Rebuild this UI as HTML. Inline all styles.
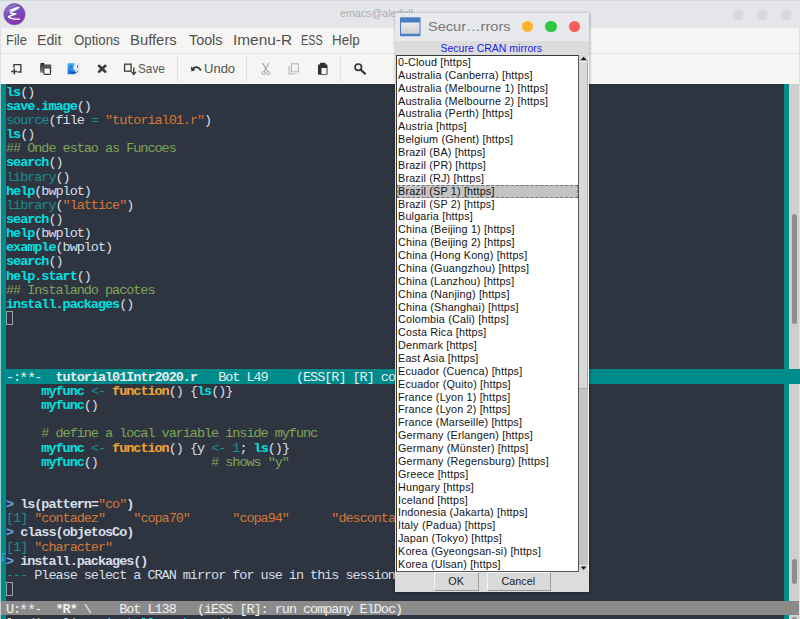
<!DOCTYPE html><html><head><meta charset="utf-8"><style>
*{margin:0;padding:0;box-sizing:border-box}
html,body{width:800px;height:619px;overflow:hidden;background:#2e3540}
body{position:relative;font-family:"Liberation Sans",sans-serif}
div{position:absolute}
.ed{font-family:"Liberation Mono",monospace;font-size:13.5px;letter-spacing:-1.03px;white-space:pre;line-height:14px;color:#d8dee9;left:6px}
.kw{color:#00e0e0;font-weight:bold}
.dim{color:#1c8c94}
.str{color:#d3783a}
.cm{color:#7ea45a}
.fn{color:#f2a52e;font-weight:bold}
.pr{color:#6fa5e0;font-weight:bold}
.inp{color:#d8dee9;font-weight:bold}
.mi{font-size:14.4px;color:#505050;white-space:pre;line-height:16px;transform-origin:0 0}
.li{left:398px;font-size:10.8px;letter-spacing:0.18px;color:#141414;white-space:pre;line-height:13px}
</style></head><body>
<div style="left:0;top:0;width:800px;height:28px;background:#e5e6ea"></div>
<div style="left:0;top:0;width:800px;height:1px;background:#d5d6da"></div>
<svg style="position:absolute;left:3px;top:3px" width="23" height="23" viewBox="0 0 23 23">
<defs><linearGradient id="eg" x1="0" y1="0" x2="0.6" y2="1"><stop offset="0" stop-color="#8c84cf"/><stop offset="0.55" stop-color="#7a4fb9"/><stop offset="1" stop-color="#8a2fb5"/></linearGradient></defs>
<circle cx="11.5" cy="11.2" r="10.6" fill="url(#eg)" stroke="#6a3aa0" stroke-width="0.6"/>
<path d="M7 7.6 C10 6 13 4.6 15.7 4.4 C13 7 8.5 8.2 7.6 10 C9 11 11 10.6 12.8 10.9 C10 12 6 12.6 5.4 13.8 C8 16.2 13 16.4 16.4 16.3" fill="none" stroke="#fff" stroke-width="1.5" stroke-linecap="round" stroke-linejoin="round"/>
</svg>
<div style="left:340px;top:7px;font-size:11px;line-height:13px;color:#a9acb3;white-space:pre;transform:scaleX(0.97);transform-origin:0 0">emacs@aledell</div>
<div style="left:732.5px;top:8.5px;width:11px;height:11px;border-radius:50%;background:#d8d9dd"></div>
<div style="left:756.5px;top:8.5px;width:11px;height:11px;border-radius:50%;background:#d8d9dd"></div>
<div style="left:780.5px;top:8.5px;width:11px;height:11px;border-radius:50%;background:#d8d9dd"></div>
<div style="left:0;top:28px;width:800px;height:25px;background:#f6f5f3"></div>
<div style="left:0;top:53px;width:800px;height:1px;background:#e4e2df"></div>
<div style="left:0;top:54px;width:800px;height:29px;background:#f6f5f3"></div>
<div style="left:0;top:28px;width:1px;height:55px;background:#e2e3e6"></div>
<div class="mi" style="left:5.85px;top:32px;transform:scaleX(0.902)">File</div>
<div class="mi" style="left:37.26px;top:32px;transform:scaleX(0.987)">Edit</div>
<div class="mi" style="left:73.75px;top:32px;transform:scaleX(0.921)">Options</div>
<div class="mi" style="left:129.72px;top:32px;transform:scaleX(1.031)">Buffers</div>
<div class="mi" style="left:188.75px;top:32px;transform:scaleX(0.996)">Tools</div>
<div class="mi" style="left:232.68px;top:32px;transform:scaleX(1.069)">Imenu-R</div>
<div class="mi" style="left:301.25px;top:32px;transform:scaleX(0.754)">ESS</div>
<div class="mi" style="left:332.31px;top:32px;transform:scaleX(0.935)">Help</div>
<div style="left:177px;top:57px;width:1px;height:24px;background:#e2e0dc"></div>
<div style="left:246px;top:57px;width:1px;height:24px;background:#e2e0dc"></div>
<div style="left:340px;top:57px;width:1px;height:24px;background:#e2e0dc"></div>
<svg style="position:absolute;left:0;top:54px" width="380" height="29" viewBox="0 54 380 29">
<!-- new file -->
<path d="M14 67.8 V64.6 H20.8 V72 H17.8" fill="none" stroke="#3a3a3a" stroke-width="1.4"/>
<path d="M11.2 71.5 H17.3 M14.3 68.5 V74.6" stroke="#3a3a3a" stroke-width="1.5"/>
<!-- open/copy -->
<defs><linearGradient id="og" x1="0" y1="0" x2="0.3" y2="1"><stop offset="0" stop-color="#3a3a3a"/><stop offset="1" stop-color="#8a8a8a"/></linearGradient></defs>
<rect x="40.6" y="63" width="3.6" height="2" fill="#222"/>
<rect x="40" y="64.5" width="11.3" height="8.3" rx="1" fill="url(#og)"/>
<rect x="43.8" y="67.8" width="6.6" height="6.5" rx="0.8" fill="#fbfbfb" stroke="#3c3c3c" stroke-width="1.2"/>
<!-- finder -->
<defs><linearGradient id="fb" x1="0" y1="0" x2="0" y2="1"><stop offset="0" stop-color="#3ab0f5"/><stop offset="1" stop-color="#1a6fe0"/></linearGradient></defs>
<rect x="67.6" y="63.2" width="12.6" height="11" rx="1" fill="#e6ecf2"/>
<path d="M68.6 63.2 H74.8 C73.6 65.5 73.2 68 73.6 70 H75 C75.1 71.5 75.3 73 75.6 74.2 H68.6 C68 74.2 67.6 73.8 67.6 73.2 V64.2 C67.6 63.6 68 63.2 68.6 63.2Z" fill="url(#fb)"/>
<path d="M70.8 65.6 V67.4 M77.6 65.6 V67.4" stroke="#1b3a66" stroke-width="0.9"/>
<path d="M69.8 71.6 C72 73 76 73 78.2 71.4" stroke="#1b3a66" stroke-width="0.7" fill="none"/>
<!-- close X -->
<path d="M99 65.8 L105.3 71.7 M105.3 65.8 L99 71.7" stroke="#3a3a3a" stroke-width="2.6" stroke-linecap="round"/>
<!-- save icon -->
<rect x="124.6" y="64.2" width="6.5" height="7" fill="none" stroke="#3a3a3a" stroke-width="1.3"/>
<path d="M133.8 67.5 V73.8 M131.6 71.8 L133.8 74.5 L136 71.8" fill="none" stroke="#3a3a3a" stroke-width="1.3"/>
<!-- undo arrow -->
<path d="M192.5 69.5 C194 66.5 198 66 201 70.5" fill="none" stroke="#333" stroke-width="1.8"/>
<path d="M190.8 66.5 L191.5 71.5 L195.5 70 Z" fill="#333"/>
<!-- scissors -->
<path d="M262.5 63 L267.5 71.5 M269 63 L264 71.5" stroke="#a6a6a6" stroke-width="1.2"/>
<circle cx="263.6" cy="73" r="1.6" fill="none" stroke="#a6a6a6" stroke-width="1"/>
<circle cx="268.4" cy="73" r="1.6" fill="none" stroke="#a6a6a6" stroke-width="1"/>
<!-- copy -->
<rect x="291.5" y="63.8" width="6.8" height="8" fill="none" stroke="#b2b2b2" stroke-width="1"/>
<path d="M289.2 66 V74 H295.5" fill="none" stroke="#b2b2b2" stroke-width="1.1"/>
<!-- paste -->
<rect x="318" y="64.3" width="9.5" height="10.5" rx="1.5" fill="#303030"/>
<rect x="320" y="62.8" width="5.5" height="2.5" rx="0.8" fill="#303030"/>
<rect x="321.5" y="68" width="5" height="6" fill="#f6f5f3"/>
<!-- search -->
<circle cx="358.3" cy="67.2" r="3.2" fill="none" stroke="#333" stroke-width="1.7"/>
<path d="M360.8 69.8 L365 73.6" stroke="#333" stroke-width="2.2" stroke-linecap="round"/>
</svg>
<div style="left:137.6px;top:62px;font-size:12.4px;color:#555;white-space:pre;line-height:14px;transform:scaleX(0.95);transform-origin:0 0">Save</div>
<div style="left:203.5px;top:62px;font-size:12.4px;color:#555;white-space:pre;line-height:14px;transform:scaleX(1.05);transform-origin:0 0">Undo</div>
<div style="left:0;top:83px;width:800px;height:1px;background:#fbfaf9"></div>
<div style="left:0;top:84px;width:1px;height:535px;background:#a4cccc"></div>
<div style="left:1px;top:84px;width:5px;height:535px;background:#008b8b"></div>
<div style="left:784px;top:84px;width:5px;height:535px;background:#008b8b"></div>
<div style="left:789px;top:84px;width:10px;height:535px;background:#cfcfcf"></div>
<div style="left:792px;top:617px;width:5px;height:8px;border-radius:2.5px;background:#8e8e8e"></div>
<div style="left:799px;top:28px;width:1px;height:591px;background:#dfe1e5"></div>
<div style="left:792px;top:214px;width:4.5px;height:110px;border-radius:2.5px;background:#8e8e8e"></div>
<div style="left:792px;top:559px;width:4.5px;height:25px;border-radius:2.5px;background:#8e8e8e"></div>
<div class="ed" style="top:85.70px"><span class="kw">ls</span>()</div>
<div class="ed" style="top:99.84px"><span class="kw">save.image</span>()</div>
<div class="ed" style="top:113.98px"><span class="dim">source</span>(file <span class="dim">=</span> <span class="str">&quot;tutorial01.r&quot;</span>)</div>
<div class="ed" style="top:128.12px"><span class="kw">ls</span>()</div>
<div class="ed" style="top:142.26px"><span class="cm">## Onde estao as Funcoes</span></div>
<div class="ed" style="top:156.40px"><span class="kw">search</span>()</div>
<div class="ed" style="top:170.54px"><span class="dim">library</span>()</div>
<div class="ed" style="top:184.68px"><span class="kw">help</span>(bwplot)</div>
<div class="ed" style="top:198.82px"><span class="dim">library</span>(<span class="str">&quot;lattice&quot;</span>)</div>
<div class="ed" style="top:212.96px"><span class="kw">search</span>()</div>
<div class="ed" style="top:227.10px"><span class="kw">help</span>(bwplot)</div>
<div class="ed" style="top:241.24px"><span class="kw">example</span>(bwplot)</div>
<div class="ed" style="top:255.38px"><span class="kw">search</span>()</div>
<div class="ed" style="top:269.52px"><span class="kw">help.start</span>()</div>
<div class="ed" style="top:283.66px"><span class="cm">## Instalando pacotes</span></div>
<div class="ed" style="top:297.80px"><span class="kw">install.packages</span>()</div>
<div style="left:6px;top:311px;width:7px;height:14px;border:1px solid #98a2a6"></div>
<div style="left:6px;top:369px;width:778px;height:15px;background:#008b8b"></div>
<div style="left:784px;top:369px;width:16px;height:15px;background:#008b8b"></div>
<div class="ed" style="top:370.5px;color:#e6eef0">-:<span style="display:inline-block;transform:translateY(1.5px) scale(1.15)">**</span>-  <b>tutorial01Intr2020.r</b>   Bot L49    (ESS[R] [R] co</div>
<div class="ed" style="top:385.00px">     <span class="kw">myfunc</span> <span class="dim">&lt;-</span> <span class="fn">function</span>() {<span class="kw">ls</span>()}</div>
<div class="ed" style="top:399.14px">     <span class="kw">myfunc</span>()</div>
<div class="ed" style="top:427.42px">     <span class="cm"># define a local variable inside myfunc</span></div>
<div class="ed" style="top:441.56px">     <span class="kw">myfunc</span> <span class="dim">&lt;-</span> <span class="fn">function</span>() {y <span class="dim">&lt;-</span> <span class="dim">1</span>; <span class="kw">ls</span>()}</div>
<div class="ed" style="top:455.70px">     <span class="kw">myfunc</span>()                <span class="cm"># shows &quot;y&quot;</span></div>
<div class="ed" style="top:498.12px"><span class="pr">&gt;</span> <span class="inp">ls(pattern=</span><span class="str">&quot;co&quot;</span><span class="inp">)</span></div>
<div class="ed" style="top:512.26px"><span class="dim">[1]</span> <span class="str">&quot;contadez&quot;</span>    <span class="str">&quot;copa70&quot;</span>      <span class="str">&quot;copa94&quot;</span>      <span class="str">&quot;descontar&quot;</span></div>
<div class="ed" style="top:526.40px"><span class="pr">&gt;</span> <span class="inp">class(objetosCo)</span></div>
<div class="ed" style="top:540.54px"><span class="dim">[1]</span> <span class="str">&quot;character&quot;</span></div>
<div class="ed" style="top:554.68px"><span class="pr">&gt;</span> <span class="inp">install.packages()</span></div>
<div class="ed" style="top:568.82px"><span class="dim">---</span> Please select a CRAN mirror for use in this session</div>
<div style="left:6px;top:582px;width:7px;height:14px;border:1px solid #98a2a6"></div>
<div class="ed" style="top:617px;color:#c8ccd0">loading li... <span class="kw" style="font-weight:normal">install.packages</span>()</div>
<svg style="position:absolute;left:0;top:550px" width="7" height="14"><path d="M6 3.5 H2.8 V10.5" fill="none" stroke="#22aaee" stroke-width="1.1"/><path d="M1 9.5 L2.8 11.8 L4.6 9.5Z" fill="#22aaee"/></svg>
<div style="left:0;top:601px;width:799px;height:14px;background:#8b8b8b"></div>
<div style="left:0;top:601px;width:1px;height:14px;background:#c6caca"></div>
<div class="ed" style="top:602.5px;color:#f0f0f0">U:<span style="display:inline-block;transform:translateY(1.5px) scale(1.15)">**</span>-  <b>*R*</b> \    Bot L138   (iESS [R]: run company ElDoc)</div>
<div style="left:395px;top:13px;width:194px;height:579px;background:#dcdcdc;box-shadow:0 0 2.5px 0.5px rgba(0,0,0,0.28)"></div>
<div style="left:395px;top:13px;width:194px;height:28px;background:#e8e9ec"></div>
<svg style="position:absolute;left:399px;top:16px" width="23" height="22" viewBox="0 0 23 22">
<defs><linearGradient id="dg" x1="0" y1="0" x2="0" y2="1"><stop offset="0" stop-color="#ececec"/><stop offset="1" stop-color="#cfcfcf"/></linearGradient></defs>
<rect x="1" y="1.3" width="20.5" height="19" rx="1" fill="#4a7cc4"/>
<rect x="2" y="6.5" width="18.5" height="11.3" fill="url(#dg)"/>
</svg>
<div style="left:427.5px;top:19px;font-size:13px;color:#767676;white-space:pre;line-height:15px;transform:scaleX(1.12);transform-origin:0 0">Secur…rrors</div>
<div style="left:521.7px;top:21.3px;width:11.2px;height:11.2px;border-radius:50%;background:#f7b52c"></div>
<div style="left:545.4px;top:21.3px;width:11.2px;height:11.2px;border-radius:50%;background:#2ec840"></div>
<div style="left:569.2px;top:21.3px;width:11.2px;height:11.2px;border-radius:50%;background:#f85d5a"></div>
<div style="left:440.5px;top:42px;font-size:10.5px;color:#2020e8;white-space:pre;line-height:12px">Secure CRAN mirrors</div>
<div style="left:396px;top:55px;width:183px;height:517px;background:#fff;border-top:1.5px solid #3a3a3a;border-left:1.5px solid #3a3a3a;border-bottom:1px solid #555;border-right:1px solid #555"></div>
<div class="li" style="top:56.00px">0-Cloud [https]</div>
<div class="li" style="top:68.87px">Australia (Canberra) [https]</div>
<div class="li" style="top:81.74px">Australia (Melbourne 1) [https]</div>
<div class="li" style="top:94.61px">Australia (Melbourne 2) [https]</div>
<div class="li" style="top:107.48px">Australia (Perth) [https]</div>
<div class="li" style="top:120.35px">Austria [https]</div>
<div class="li" style="top:133.22px">Belgium (Ghent) [https]</div>
<div class="li" style="top:146.09px">Brazil (BA) [https]</div>
<div class="li" style="top:158.96px">Brazil (PR) [https]</div>
<div class="li" style="top:171.83px">Brazil (RJ) [https]</div>
<div style="left:397px;top:184.70px;width:181px;height:13px;background:#c3c3c3;border:1px dashed #777"></div>
<div class="li" style="top:184.70px">Brazil (SP 1) [https]</div>
<div class="li" style="top:197.57px">Brazil (SP 2) [https]</div>
<div class="li" style="top:210.44px">Bulgaria [https]</div>
<div class="li" style="top:223.31px">China (Beijing 1) [https]</div>
<div class="li" style="top:236.18px">China (Beijing 2) [https]</div>
<div class="li" style="top:249.05px">China (Hong Kong) [https]</div>
<div class="li" style="top:261.92px">China (Guangzhou) [https]</div>
<div class="li" style="top:274.79px">China (Lanzhou) [https]</div>
<div class="li" style="top:287.66px">China (Nanjing) [https]</div>
<div class="li" style="top:300.53px">China (Shanghai) [https]</div>
<div class="li" style="top:313.40px">Colombia (Cali) [https]</div>
<div class="li" style="top:326.27px">Costa Rica [https]</div>
<div class="li" style="top:339.14px">Denmark [https]</div>
<div class="li" style="top:352.01px">East Asia [https]</div>
<div class="li" style="top:364.88px">Ecuador (Cuenca) [https]</div>
<div class="li" style="top:377.75px">Ecuador (Quito) [https]</div>
<div class="li" style="top:390.62px">France (Lyon 1) [https]</div>
<div class="li" style="top:403.49px">France (Lyon 2) [https]</div>
<div class="li" style="top:416.36px">France (Marseille) [https]</div>
<div class="li" style="top:429.23px">Germany (Erlangen) [https]</div>
<div class="li" style="top:442.10px">Germany (Münster) [https]</div>
<div class="li" style="top:454.97px">Germany (Regensburg) [https]</div>
<div class="li" style="top:467.84px">Greece [https]</div>
<div class="li" style="top:480.71px">Hungary [https]</div>
<div class="li" style="top:493.58px">Iceland [https]</div>
<div class="li" style="top:506.45px">Indonesia (Jakarta) [https]</div>
<div class="li" style="top:519.32px">Italy (Padua) [https]</div>
<div class="li" style="top:532.19px">Japan (Tokyo) [https]</div>
<div class="li" style="top:545.06px">Korea (Gyeongsan-si) [https]</div>
<div class="li" style="top:557.93px">Korea (Ulsan) [https]</div>
<div style="left:579px;top:55px;width:9px;height:516px;background:#c4c4c4"></div>
<div style="left:579px;top:61px;width:9px;height:328px;background:#d9d9d9;border-right:1px solid #aaa;border-bottom:1px solid #aaa;border-top:1px solid #eee"></div>
<div style="left:579px;top:55px;width:9px;height:6px;background:#d9d9d9;border-bottom:1px solid #aaa"></div>
<div style="left:579px;top:565px;width:9px;height:6px;background:#d9d9d9;border-top:1px solid #eee"></div>
<div style="left:588px;top:55px;width:1px;height:517px;background:#f4f4f4"></div>
<svg style="position:absolute;left:579px;top:55px" width="10" height="517" viewBox="0 0 10 517">
<path d="M1.8 5 L4.6 1.8 L7.4 5 Z" fill="#111"/>
<path d="M1.8 511.5 L4.6 514.7 L7.4 511.5 Z" fill="#111"/>
</svg>
<div style="left:433.6px;top:572.4px;width:45.0px;height:18.5px;background:#d9d9d9;border-top:1px solid #f4f4f4;border-left:1px solid #f4f4f4;border-right:1px solid #9a9a9a;border-bottom:1px solid #9a9a9a"></div>
<div style="left:448.3px;top:575px;font-size:10.8px;color:#222;white-space:pre;line-height:12px">OK</div>
<div style="left:486.5px;top:572.4px;width:64.5px;height:18.5px;background:#d9d9d9;border-top:1px solid #f4f4f4;border-left:1px solid #f4f4f4;border-right:1px solid #9a9a9a;border-bottom:1px solid #9a9a9a"></div>
<div style="left:501.5px;top:575px;font-size:10.8px;color:#222;white-space:pre;line-height:12px">Cancel</div>
</body></html>
